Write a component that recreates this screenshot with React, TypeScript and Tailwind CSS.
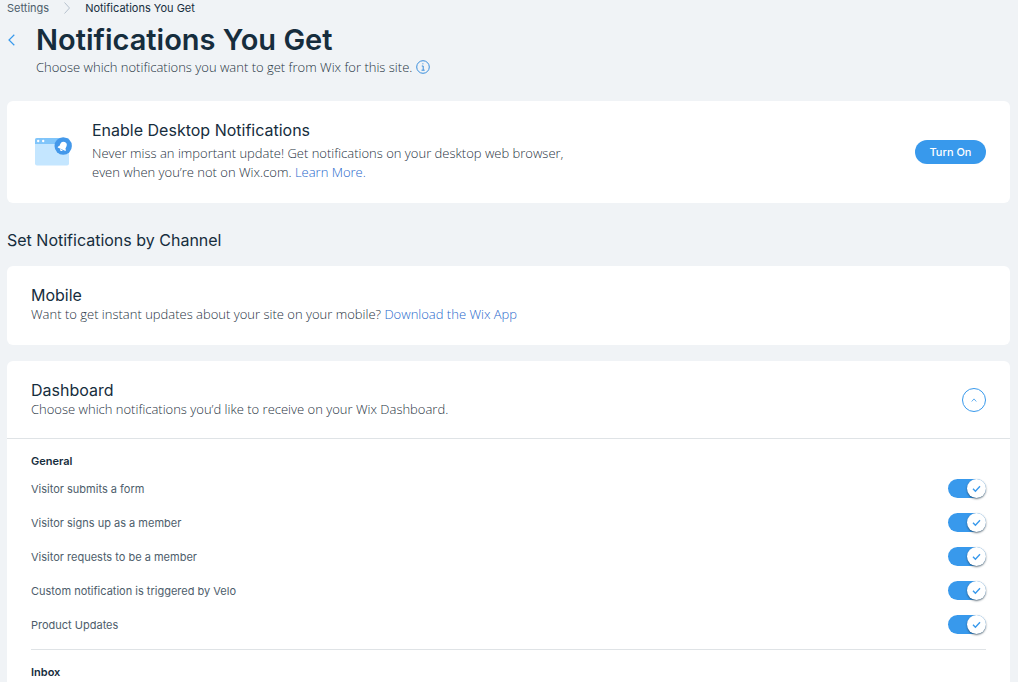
import { useState } from "react";

const generalSettings = [
  "Visitor submits a form",
  "Visitor signs up as a member",
  "Visitor requests to be a member",
  "Custom notification is triggered by Velo",
  "Product Updates",
];

function Toggle({ id }: { id: string }) {
  const [on, setOn] = useState(true);
  return (
    <span className="relative inline-flex h-5 w-[38px] shrink-0">
      <input
        id={id}
        type="checkbox"
        role="switch"
        checked={on}
        onChange={() => setOn(!on)}
        className="peer h-[19px] w-[38px] cursor-pointer appearance-none rounded-full bg-[#b6c1cd] checked:bg-[#3899ec]"
      />
      <span className="pointer-events-none absolute top-0 left-0 flex size-[19px] items-center justify-center rounded-full bg-white shadow-[0_1px_2px_rgba(22,45,61,0.65)] peer-checked:right-0 peer-checked:left-auto">
        <svg width="9" height="8" viewBox="0 0 9 8" fill="none" stroke="#3899ec" strokeWidth="1.4">
          <path d="M1 3.8 3.4 6.2 8 1.3" />
        </svg>
      </span>
    </span>
  );
}

function DesktopIcon() {
  return (
    <svg width="38" height="30" viewBox="0 0 38 30" className="shrink-0" aria-hidden="true">
      <rect x="1" y="1" width="34" height="27.5" rx="2" fill="#c4e6ff" />
      <path d="M1 7V3a2 2 0 0 1 2-2h30a2 2 0 0 1 2 2v4z" fill="#80c5fa" />
      <circle cx="4.2" cy="4" r="1.2" fill="#fff" />
      <circle cx="9.2" cy="4" r="1.2" fill="#fff" />
      <circle cx="29.2" cy="9" r="8.7" fill="#4398ea" />
      <g transform="rotate(24 29 9)" fill="#fff">
        <path d="M24.7 12.5v-1l1-1V8a3.3 3.3 0 0 1 6.6 0v2.5l1 1v1z" />
        <path d="M27.6 13h2.8a1.4 1.4 0 0 1-2.8 0z" />
      </g>
    </svg>
  );
}

export default function App() {
  const [open, setOpen] = useState(true);
  return (
    <div className="min-h-screen bg-[#f0f3f6] pr-2 pl-[7px] font-['Inter','Liberation_Sans',sans-serif] text-[13px] leading-5 text-[#4d5d6b]">
      <header>
        <nav aria-label="Breadcrumb" className="flex h-4 items-center text-[11px] leading-4">
          <a href="#settings">Settings</a>
          <svg width="6" height="12" viewBox="0 0 6 12" fill="none" stroke="#b6c1cd" className="mx-[15px]" aria-hidden="true">
            <path d="m.5.5 5 5.5-5 5.5" />
          </svg>
          <span className="text-[#162d3d]">Notifications You Get</span>
        </nav>
        <div className="flex pt-1">
          <button type="button" aria-label="Back" className="flex h-10 w-[29px] shrink-0 items-center pl-px">
            <svg width="7" height="12" viewBox="0 0 7 12" fill="none" stroke="#3899ec" strokeWidth="1.2">
              <path d="M6.3.8 1 6l5.3 5.2" />
            </svg>
          </button>
          <div>
            <h1 className="h-[37px] text-[29px] leading-10 font-semibold text-[#162d3d]">Notifications You Get</h1>
            <p className="flex items-center gap-1 font-['Open_Sans',sans-serif] font-light text-[#1f3342]">
              Choose which notifications you want to get from Wix for this site.
              <svg width="14" height="14" viewBox="0 0 14 14" fill="none" stroke="#3b8fdd" role="img" aria-label="More information">
                <circle cx="7" cy="7" r="6.3" />
                <path d="M5.8 6h1.4v4.2M5.5 10.2h3.2M6.4 3.8h1" />
              </svg>
            </p>
          </div>
        </div>
      </header>

      <main>
        <section className="mt-6 flex items-center rounded-md bg-white py-[19px] pr-6 pl-[27px]">
          <DesktopIcon />
          <div className="ml-5 pb-0.5">
            <h2 className="text-base leading-5 text-[#162d3d]">Enable Desktop Notifications</h2>
            <p className="mt-1 font-['Open_Sans',sans-serif] leading-[19px] font-light text-[#1f3342]">
              Never miss an important update! Get notifications on your desktop web browser,
              <br />
              even when you’re not on Wix.com.{" "}
              <a href="#learn" className="text-[#1f68cc]">Learn More.</a>
            </p>
          </div>
          <button type="button" className="ml-auto h-6 w-[71px] rounded-full bg-[#3899ec] text-[11px] font-medium text-white">
            Turn On
          </button>
        </section>

        <h2 className="mt-[27px] text-base leading-5 text-[#162d3d]">Set Notifications by Channel</h2>

        <section className="mt-4 rounded-md bg-white px-6 pt-[19px] pb-[21px]">
          <h3 className="text-base leading-5 text-[#162d3d]">Mobile</h3>
          <p className="font-['Open_Sans',sans-serif] leading-[19px] font-light text-[#1f3342]">
            Want to get instant updates about your site on your mobile?{" "}
            <a href="#download" className="text-[#1f68cc]">Download the Wix App</a>
          </p>
        </section>

        <section className="mt-4 rounded-t-md bg-white">
          <div className="flex items-center justify-between border-b border-[#dfe3e6] px-6 py-[19px]">
            <div>
              <h3 className="text-base leading-5 text-[#162d3d]">Dashboard</h3>
              <p className="font-['Open_Sans',sans-serif] leading-[19px] font-light text-[#1f3342]">
                Choose which notifications you’d like to receive on your Wix Dashboard.
              </p>
            </div>
            <button
              type="button"
              aria-label="Toggle dashboard notifications"
              aria-expanded={open}
              onClick={() => setOpen(!open)}
              className="flex size-6 items-center justify-center rounded-full border border-[#3899ec]"
            >
              <svg width="6" height="4" viewBox="0 0 6 4" fill="none" stroke="#3899ec" strokeWidth=".8">
                <path d="m.7 3.5 2.3-2.6 2.3 2.6" />
              </svg>
            </button>
          </div>
          {open && (
            <div className="px-6 pt-3 text-[11px]">
              <h4 className="font-semibold text-[#162d3d]">General</h4>
              <ul className="border-b border-[#dfe3e6] pt-px pb-[7px]">
                {generalSettings.map((name, i) => (
                  <li key={name} className="flex h-[34px] items-center justify-between">
                    <label htmlFor={`general-${i}`}>{name}</label>
                    <Toggle id={`general-${i}`} />
                  </li>
                ))}
              </ul>
              <h4 className="pt-3 font-semibold text-[#162d3d]">Inbox</h4>
            </div>
          )}
        </section>
      </main>
    </div>
  );
}
